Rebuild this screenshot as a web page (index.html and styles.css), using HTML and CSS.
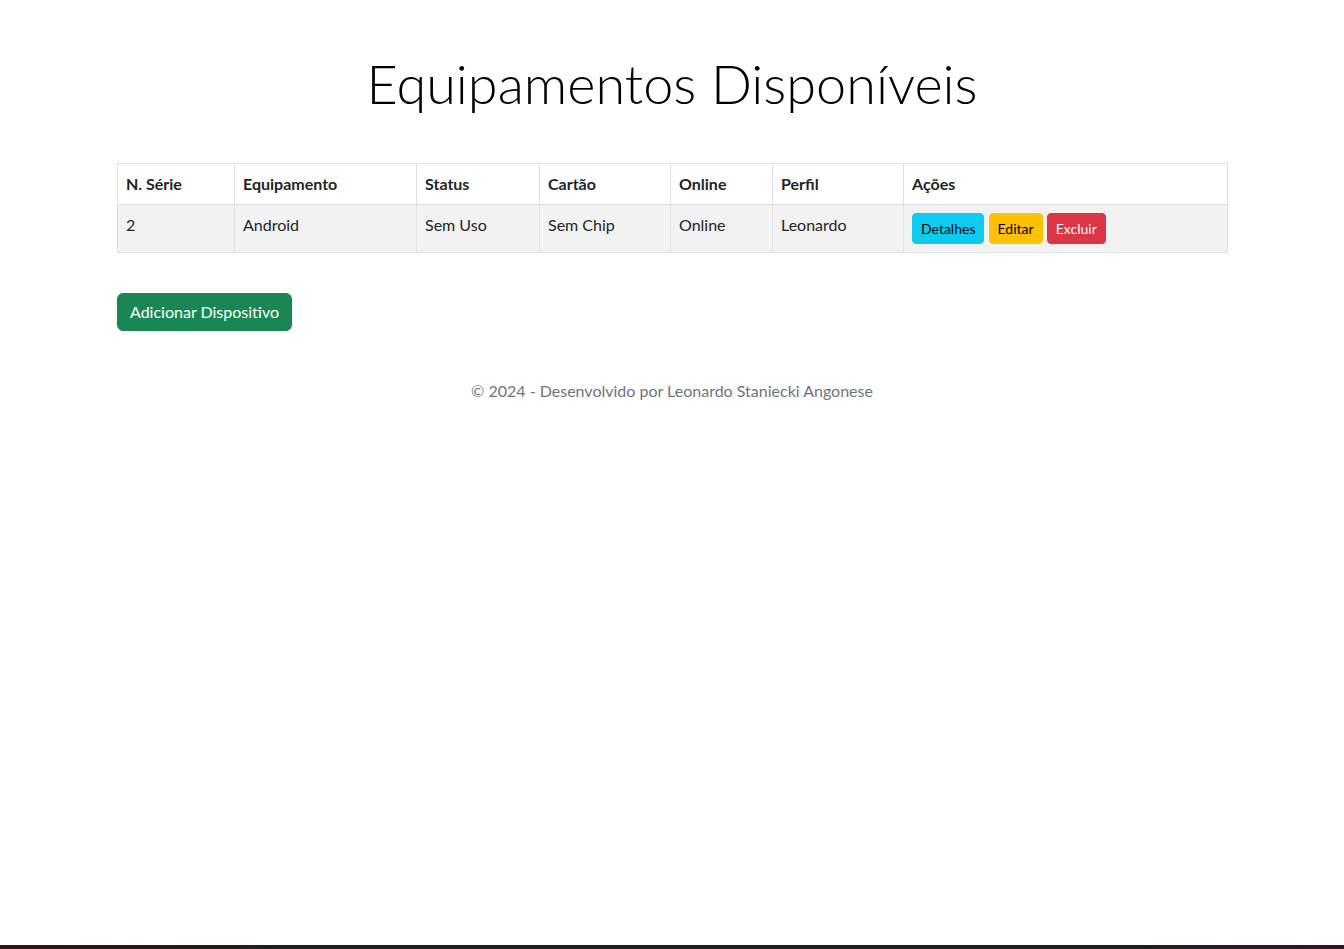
FILE: index.html
```html
<!DOCTYPE html>
<html lang="pt-BR">
<head>
<meta charset="utf-8">
<title>Equipamentos Disponíveis</title>
<link rel="stylesheet" href="styles.css">
</head>
<body>
<div class="page">
  <main class="container">
    <h1 class="title">Equipamentos Disponíveis</h1>
    <table class="table">
      <thead>
        <tr>
          <th class="c1">N. Série</th>
          <th class="c2">Equipamento</th>
          <th class="c3">Status</th>
          <th class="c4">Cartão</th>
          <th class="c5">Online</th>
          <th class="c6">Perfil</th>
          <th class="c7">Ações</th>
        </tr>
      </thead>
      <tbody>
        <tr>
          <td>2</td>
          <td>Android</td>
          <td>Sem Uso</td>
          <td>Sem Chip</td>
          <td>Online</td>
          <td>Leonardo</td>
          <td class="actions"><a class="btn btn-sm btn-info" href="#">Detalhes</a> <a class="btn btn-sm btn-warning" href="#">Editar</a> <button class="btn btn-sm btn-danger" type="button">Excluir</button></td>
        </tr>
      </tbody>
    </table>
    <a class="btn btn-success btn-add" href="#">Adicionar Dispositivo</a>
    <footer class="footer">© 2024 - Desenvolvido por Leonardo Staniecki Angonese</footer>
  </main>
  <div class="taskbar"></div>
</div>
</body>
</html>
```
FILE: styles.css
```css
* { box-sizing: border-box; }
html, body { margin: 0; padding: 0; }
body {
  font-family: Lato, "Noto Sans", sans-serif;
  font-size: 16px;
  line-height: 1.5;
  color: #212529;
  background: #fff;
}
.page { min-height: 100vh; display: flex; flex-direction: column; }
.container { width: 1110px; margin: 0 auto; flex: 1; }
.title {
  margin: 50px 0 46px;
  font-size: 54px;
  font-weight: 300;
  line-height: 67px;
  text-align: center;
  color: #000;
}
.table { width: 1110px; border-collapse: collapse; table-layout: fixed; margin-bottom: 40px; }
.table th, .table td {
  border: 1px solid #dee2e6;
  padding: 8px;
  text-align: left;
  vertical-align: top;
}
.table th { font-weight: 700; }
.table tbody tr { background: #f2f2f2; }
.c1 { width: 117px; } .c2 { width: 182px; } .c3 { width: 123px; } .c4 { width: 131px; }
.c5 { width: 102px; } .c6 { width: 131px; } .c7 { width: 324px; }
.btn {
  display: inline-block;
  font-family: inherit;
  text-decoration: none;
  border: 1px solid transparent;
  cursor: pointer;
}
.btn-sm { font-size: 14px; line-height: 21px; padding: 4px 8px; border-radius: 4px; }
.btn-info { background: #0dcaf0; border-color: #0dcaf0; color: #000; }
.btn-warning { background: #ffc107; border-color: #ffc107; color: #000; }
.btn-danger { background: #dc3545; border-color: #dc3545; color: #fff; }
.btn-success { background: #198754; border-color: #198754; color: #fff; }
.btn-add { font-size: 16px; line-height: 24px; padding: 6px 12px; border-radius: 6px; }
.footer { margin-top: 48px; text-align: center; color: #6c757d; }
.taskbar { height: 4px; background: linear-gradient(90deg, #3a1010 0%, #1e1e1e 20%, #1e1e1e 85%, #3a1028 100%); }
```
